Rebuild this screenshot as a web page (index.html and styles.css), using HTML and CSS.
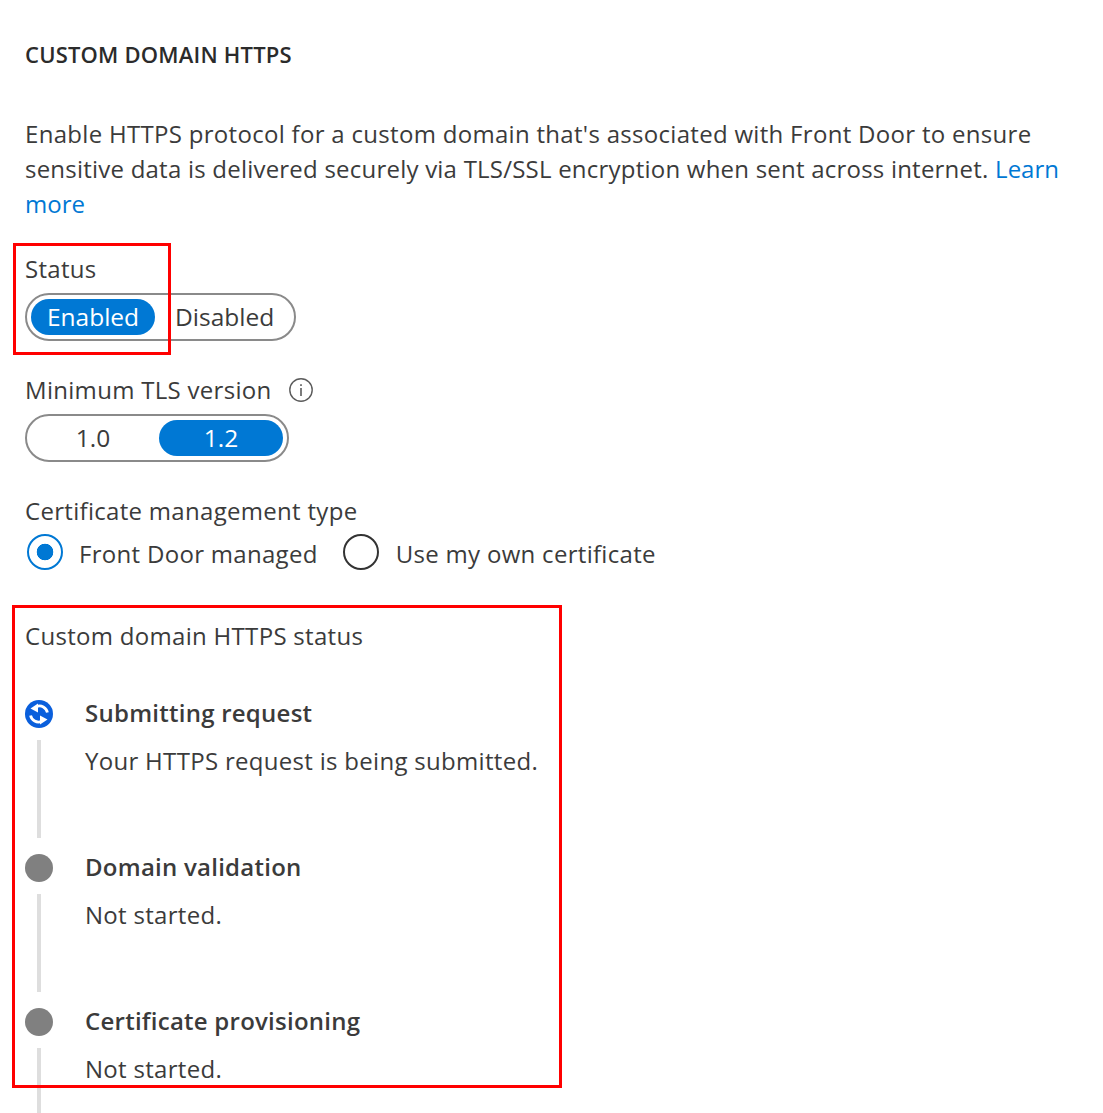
FILE: index.html
```html
<!DOCTYPE html>
<html lang="en">
<head>
<meta charset="utf-8">
<title>Custom domain HTTPS</title>
<link rel="stylesheet" href="styles.css">
</head>
<body>
<main class="page">
  <h1 class="heading">CUSTOM DOMAIN HTTPS</h1>
  <p class="intro">Enable HTTPS protocol for a custom domain that's associated with Front Door to ensure <span class="intro-tight">sensitive data is delivered securely via TLS/SSL encryption when sent across internet.</span> <a class="link" href="#">Learn more</a></p>

  <div class="label label-status">Status</div>
  <div class="toggle toggle-status">
    <span class="opt opt-on opt-enabled">Enabled</span>
    <span class="opt opt-disabled">Disabled</span>
  </div>

  <div class="label label-tls">Minimum TLS version
    <svg class="info" width="24" height="24" viewBox="0 0 24 24" aria-hidden="true"><circle cx="12" cy="12" r="11.2" fill="none" stroke="#5c5c5c" stroke-width="1.4"/><rect x="11.2" y="10" width="1.6" height="8" fill="#5c5c5c"/><rect x="11.2" y="6.2" width="1.6" height="1.8" fill="#5c5c5c"/></svg>
  </div>
  <div class="toggle toggle-tls">
    <span class="opt opt-half">1.0</span>
    <span class="opt opt-half opt-on">1.2</span>
  </div>

  <div class="label label-cert">Certificate management type</div>
  <div class="radios">
    <span class="radio radio-on"></span><span class="radio-text">Front Door managed</span>
    <span class="radio radio-second"></span><span class="radio-text">Use my own certificate</span>
  </div>

  <div class="label label-https">Custom domain HTTPS status</div>
  <ol class="steps">
    <li class="step">
      <div class="rail">
        <svg class="dot-active" width="28" height="28" viewBox="0 0 28 28" aria-hidden="true">
          <circle cx="14" cy="14" r="14" fill="#0a5fdc"/>
          <path d="M22.4 12.5A8 8 0 0 0 11.5 6.6" fill="none" stroke="#fff" stroke-width="2.8"/>
          <path d="M13 3.5L5.5 8.5l7.5 4z" fill="#fff"/>
          <path d="M5.6 15.5A8 8 0 0 0 16.5 21.4" fill="none" stroke="#fff" stroke-width="2.8"/>
          <path d="M15 24.5L22.5 19.5l-7.5-4z" fill="#fff"/>
        </svg>
        <span class="line"></span>
      </div>
      <div class="step-body">
        <div class="step-title">Submitting request</div>
        <div class="step-desc">Your HTTPS request is being submitted.</div>
      </div>
    </li>
    <li class="step">
      <div class="rail"><span class="dot"></span><span class="line"></span></div>
      <div class="step-body">
        <div class="step-title">Domain validation</div>
        <div class="step-desc">Not started.</div>
      </div>
    </li>
    <li class="step">
      <div class="rail"><span class="dot"></span><span class="line"></span></div>
      <div class="step-body">
        <div class="step-title">Certificate provisioning</div>
        <div class="step-desc step-desc-last">Not started.</div>
      </div>
    </li>
  </ol>
</main>
<div class="mark mark-status"></div>
<div class="mark mark-https"></div>
</body>
</html>
```
FILE: styles.css
```css
html, body {
  margin: 0;
  padding: 0;
  background: #fff;
  height: 1113px;
  overflow: hidden;
}
body {
  position: relative;
  font-family: "Open Sans", "Noto Sans", sans-serif;
  font-size: 24px;
  letter-spacing: 0.3px;
  color: #3b3b3b;
}
.page {
  padding: 36px 30px 0 25px;
}
.heading {
  margin: 0;
  font-size: 22px;
  line-height: 36px;
  font-weight: 600;
  letter-spacing: 0.2px;
  color: #2b2b2b;
}
.intro {
  margin: 44px 0 0;
  line-height: 35px;
  font-size: 24px;
}
.intro-tight { letter-spacing: 0.22px; }
.link { color: #0078d4; text-decoration: none; letter-spacing: 0; }
.label { line-height: 35px; font-size: 24px; }
.label-status { margin-top: 30px; }
.label-tls { margin-top: 31px; display: flex; align-items: center; gap: 17px; }
.label-cert { margin-top: 31px; }
.label-https { margin-top: 46px; }
.toggle {
  box-sizing: border-box;
  height: 48px;
  margin-top: 7px;
  border: 2px solid #8a8a8a;
  border-radius: 24px;
  padding: 4px;
  display: flex;
  align-items: stretch;
}
.toggle-status { width: 271px; }
.toggle-tls { width: 264px; gap: 4px; }
.opt {
  display: flex;
  flex: none;
  align-items: center;
  justify-content: center;
  box-sizing: border-box;
  padding-bottom: 2px;
  border-radius: 18px;
  font-size: 24.5px;
  letter-spacing: 0;
}
.opt-on { background: #0078d4; color: #fff; }
.opt-enabled { width: 124px; }
.opt-disabled { padding-left: 20px; }
.opt-half { width: 124px; }
.radios {
  display: flex;
  align-items: center;
  height: 38px;
  margin-top: 6px;
  margin-left: 2px;
}
.radio {
  box-sizing: border-box;
  width: 36px;
  height: 36px;
  margin-top: -2px;
  border-radius: 50%;
  border: 2px solid #333;
  flex: none;
}
.radio-on {
  border-color: #0078d4;
  background: radial-gradient(circle, #0078d4 0, #0078d4 8px, #fff 8.6px);
}
.radio-second { margin-left: 25px; margin-right: 1px; }
.radio-text { margin-left: 16px; }
.steps {
  list-style: none;
  margin: 0;
  padding: 0;
  margin-top: 46px;
}
.step {
  display: flex;
  height: 154px;
}
.rail {
  width: 28px;
  flex: none;
  display: flex;
  flex-direction: column;
  align-items: center;
  padding-top: 1px;
}
.dot-active, .dot { display: block; width: 28px; height: 28px; flex: none; }
.dot { border-radius: 50%; background: #808080; }
.line {
  display: block;
  width: 4px;
  height: 98px;
  margin-top: 12px;
  background: #dedede;
  flex: none;
}
.step-body { margin-left: 32px; margin-top: -4px; }
.step-title { font-weight: 600; line-height: 35px; font-size: 24px; letter-spacing: 0.25px; color: #3b3b3b; }
.step-desc { margin-top: 13px; line-height: 35px; font-size: 24px; }
.mark {
  position: absolute;
  box-sizing: border-box;
  border: 3px solid #f00;
  pointer-events: none;
}
.mark-status { left: 13px; top: 243px; width: 158px; height: 112px; }
.mark-https { left: 12px; top: 605px; width: 550px; height: 483px; }
```
